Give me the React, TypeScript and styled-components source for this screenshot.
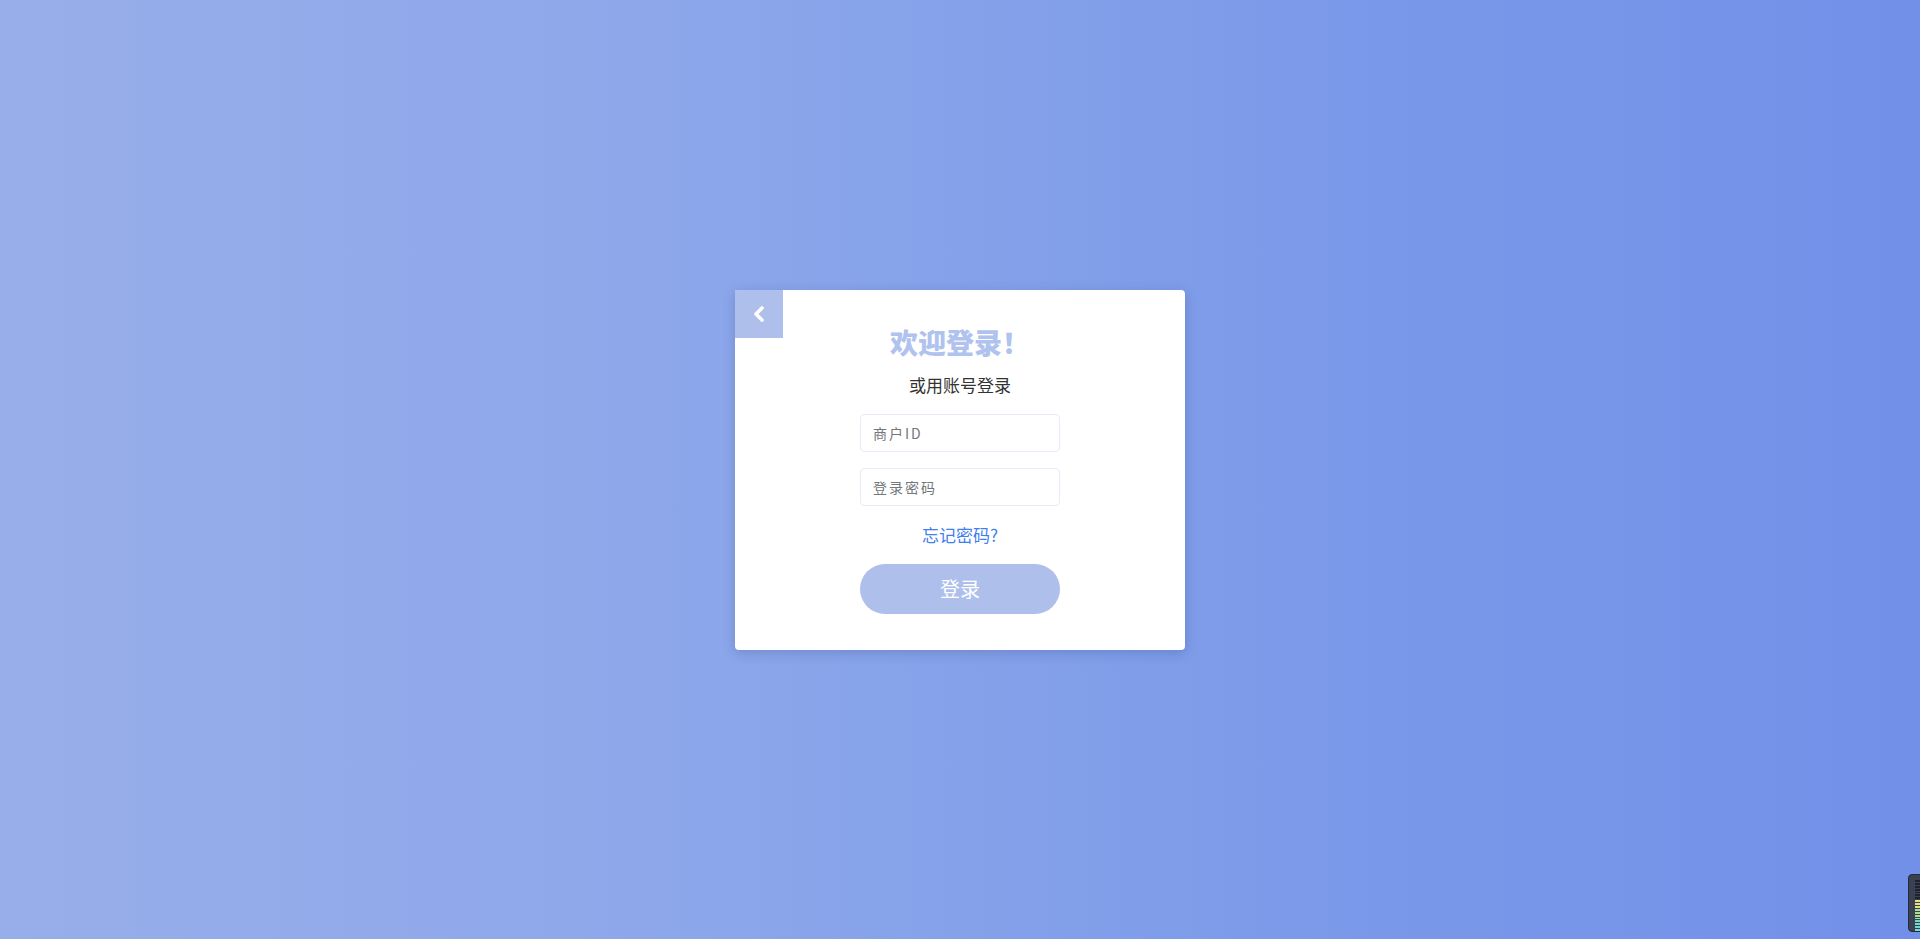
import * as React from 'react';
import styled, { createGlobalStyle } from 'styled-components';

const GlobalStyle = createGlobalStyle`
  html, body {
    margin: 0;
    padding: 0;
    height: 100%;
  }
  body {
    font-family: "Noto Sans CJK SC", "Noto Sans", "Liberation Sans", sans-serif;
  }
  * {
    box-sizing: border-box;
  }
`;

const App: React.FC = () => {
  return (
    <>
      <GlobalStyle />
      <Page>
        <Card>
          <BackButton type="button" aria-label="返回">
            <svg width="14" height="18" viewBox="0 0 14 18">
              <polyline
                points="10,3 4,9 10,15"
                fill="none"
                stroke="#fff"
                strokeWidth="3.6"
                strokeLinecap="round"
                strokeLinejoin="round"
              />
            </svg>
          </BackButton>
          <Title>欢迎登录！</Title>
          <SubTitle>或用账号登录</SubTitle>
          <Input type="text" placeholder="商户ID" />
          <Input type="password" placeholder="登录密码" />
          <Forgot href="#">忘记密码?</Forgot>
          <LoginButton type="button">登录</LoginButton>
        </Card>
        <Meter>
          {Array.from({ length: 18 }).map((_, i) => (
            <MeterBar key={i} level={i} />
          ))}
        </Meter>
      </Page>
    </>
  );
};

export default App;

const Page = styled.div`
  min-height: 100vh;
  display: flex;
  align-items: center;
  justify-content: center;
  background: linear-gradient(90deg, #97aeea 0%, #94abea 15%, #8ba6ea 38%, #7a98e9 72%, #7290e8 100%);
`;

const Card = styled.div`
  position: relative;
  width: 450px;
  height: 360px;
  background: #fff;
  border-radius: 4px;
  box-shadow: 0 3px 12px rgba(40, 60, 120, 0.25);
  display: flex;
  flex-direction: column;
  align-items: center;
  padding: 32px 0 36px;
`;

const BackButton = styled.button`
  position: absolute;
  left: 0;
  top: 0;
  width: 48px;
  height: 48px;
  border: none;
  padding: 0;
  background: #aebfeb;
  display: flex;
  align-items: center;
  justify-content: center;
  cursor: pointer;
`;

const Title = styled.h1`
  margin: 0;
  font-size: 28px;
  line-height: 40px;
  font-weight: 900;
  color: #b0c2ee;
`;

const SubTitle = styled.p`
  margin: 11px 0 0;
  font-size: 17px;
  line-height: 24px;
  font-weight: 400;
  color: #333;
`;

const Input = styled.input`
  margin-top: 17px;
  width: 200px;
  height: 38px;
  border: 1px solid #e6ebf7;
  border-radius: 4px;
  padding: 0 12px;
  font-family: inherit;
  font-size: 14px;
  letter-spacing: 2px;
  color: #333;
  outline: none;
  & + & {
    margin-top: 16px;
  }
  &::placeholder {
    color: #73767b;
  }
`;

const Forgot = styled.a`
  margin-top: 18px;
  font-size: 17px;
  line-height: 22px;
  color: #3f7ff0;
  text-decoration: none;
`;

const LoginButton = styled.button`
  margin-top: 18px;
  width: 200px;
  height: 50px;
  border: none;
  border-radius: 25px;
  background: #aebfeb;
  color: #fff;
  font-family: inherit;
  font-size: 20px;
  cursor: pointer;
`;

const Meter = styled.div`
  position: fixed;
  right: -8px;
  bottom: 7px;
  width: 20px;
  height: 58px;
  background: #3a4153;
  border: 1px solid #262b38;
  border-radius: 4px;
  padding: 5px 0 0 6px;
  display: flex;
  flex-direction: column;
  gap: 1px;
`;

const MeterBar = styled.div<{ level: number }>`
  width: 7px;
  height: 2px;
  background: ${({ level }) =>
    level < 7 ? '#1d2230' : level < 10 ? '#e6e27a' : level < 14 ? '#a6e08a' : '#6fd6d0'};
`;
